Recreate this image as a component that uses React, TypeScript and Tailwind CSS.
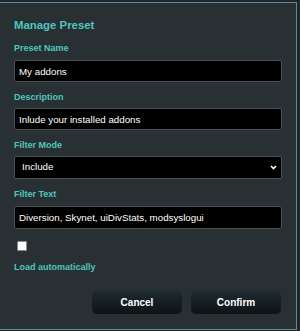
import { useState } from 'react';

const label = "block h-[12px] leading-[12px] text-[9px] font-bold text-[#4fc6bf]";
const field =
  "block w-[268px] bg-black border border-[#4b5053] rounded-[2px] px-[4px] text-[9.75px] text-white outline-none";

export default function App() {
  const [name, setName] = useState('My addons');
  const [desc, setDesc] = useState('Inlude your installed addons');
  const [mode, setMode] = useState('Include');
  const [filter, setFilter] = useState('Diversion, Skynet, uiDivStats, modsyslogui');
  const [autoLoad, setAutoLoad] = useState(false);

  return (
    <main
      className="w-[300px] h-[331px] bg-[#1f2528] pt-[2px] overflow-hidden"
      style={{ fontFamily: '"Liberation Sans", Arial, sans-serif' }}
    >
      {/* Modal, left edge runs off screen */}
      <div className="w-[297px] h-[328px] bg-[#283033] border-t border-r border-b border-[#62879a] px-[14px]">
        <h2 className="mt-[15px] h-[14px] leading-[14px] text-[11.4px] font-bold text-[#4fc6bf]">
          Manage Preset
        </h2>

        <label className={`${label} mt-[10px]`}>Preset Name</label>
        <input
          className={`${field} mt-[6px] h-[22px]`}
          value={name}
          onChange={(e) => setName(e.target.value)}
        />

        <label className={`${label} mt-[9px]`}>Description</label>
        <input
          className={`${field} mt-[5px] h-[22px]`}
          value={desc}
          onChange={(e) => setDesc(e.target.value)}
        />

        <label className={`${label} mt-[9px]`}>Filter Mode</label>
        <div className="relative mt-[5px] w-[268px]">
          <select
            className={`${field} h-[23px] pl-[7px] appearance-none`}
            value={mode}
            onChange={(e) => setMode(e.target.value)}
          >
            <option>Include</option>
            <option>Exclude</option>
          </select>
          <svg
            className="absolute right-[5px] top-[9px] pointer-events-none"
            width="7"
            height="5"
            viewBox="0 0 7 5"
          >
            <polyline points="1,1 3.5,3.5 6,1" fill="none" stroke="white" strokeWidth="1.6" />
          </svg>
        </div>

        <label className={`${label} mt-[9px]`}>Filter Text</label>
        <input
          className={`${field} mt-[6px] h-[23px]`}
          value={filter}
          onChange={(e) => setFilter(e.target.value)}
        />

        <input
          type="checkbox"
          checked={autoLoad}
          onChange={(e) => setAutoLoad(e.target.checked)}
          className="block appearance-none mt-[12px] ml-[3px] w-[10px] h-[10px] bg-white border border-[#8a8a8a] rounded-[1px]"
        />
        <label className={`${label} mt-[10px]`}>Load automatically</label>

        <div className="mt-[18px] w-[267px] flex justify-end gap-[9px]">
          <button className="w-[90px] h-[23px] rounded-[5px] bg-gradient-to-b from-[#1e2b31] to-[#0e1214] text-white text-[10px] font-bold">
            Cancel
          </button>
          <button className="w-[90px] h-[23px] rounded-[5px] bg-gradient-to-b from-[#1e2b31] to-[#0e1214] text-white text-[10px] font-bold">
            Confirm
          </button>
        </div>
      </div>
    </main>
  );
}
